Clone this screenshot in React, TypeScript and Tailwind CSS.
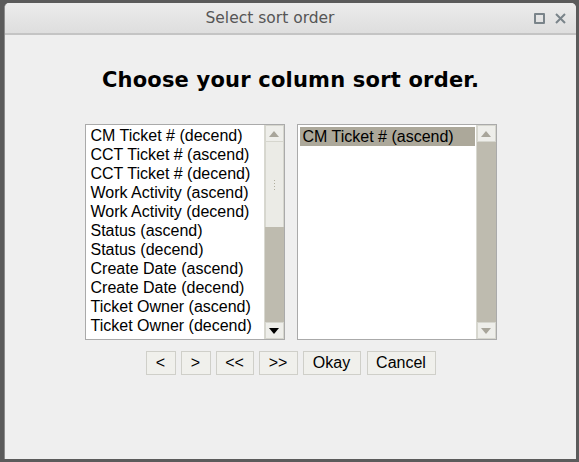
import React from "react";

const left = [
  "CM Ticket # (decend)",
  "CCT Ticket # (ascend)",
  "CCT Ticket # (decend)",
  "Work Activity (ascend)",
  "Work Activity (decend)",
  "Status (ascend)",
  "Status (decend)",
  "Create Date (ascend)",
  "Create Date (decend)",
  "Ticket Owner (ascend)",
  "Ticket Owner (decend)",
];

function Arrow({ up, dark }: { up: boolean; dark?: boolean }) {
  return (
    <svg width="10" height="6" viewBox="0 0 10 6">
      {up ? (
        <polygon points="5,0 10,6 0,6" fill={dark ? "#000" : "#a8a59a"} />
      ) : (
        <polygon points="0,0 10,0 5,6" fill={dark ? "#000" : "#a8a59a"} />
      )}
    </svg>
  );
}

function ScrollBar({ thumb }: { thumb: boolean }) {
  return (
    <div className="w-[20px] h-full flex flex-col bg-[#bebbaf] border-l border-[#d8d8d0]">
      <div className="h-[17px] bg-[#eeeeea] border border-[#d6d6ce] flex items-center justify-center">
        <Arrow up dark={false} />
      </div>
      {thumb ? (
        <>
          <div className="h-[85px] bg-[#ebebe6] border-x border-[#d6d6ce] flex items-center justify-center">
            <div className="flex flex-col gap-[2px]">
              <div className="w-[1px] h-[1px] bg-[#b0ae9e]" />
              <div className="w-[1px] h-[1px] bg-[#b0ae9e]" />
              <div className="w-[1px] h-[1px] bg-[#b0ae9e]" />
              <div className="w-[1px] h-[1px] bg-[#b0ae9e]" />
            </div>
          </div>
          <div className="flex-1" />
        </>
      ) : (
        <div className="flex-1" />
      )}
      <div className="h-[17px] bg-[#eeeeea] border border-[#d6d6ce] flex items-center justify-center">
        <Arrow up={false} dark={thumb} />
      </div>
    </div>
  );
}

function Btn({ children, w }: { children: React.ReactNode; w: string }) {
  return (
    <div
      className={`${w} h-[24px] flex items-center justify-center bg-[#f0f0ec] border border-[#cfcfc9] text-[16px] text-black`}
      style={{ fontFamily: '"Liberation Sans", Arial, sans-serif' }}
    >
      {children}
    </div>
  );
}

export default function App() {
  return (
    <div className="w-[579px] h-[462px] bg-[#5b5b5b] pt-[3px] pl-[4px] pr-[3px] pb-[3px]">
      <div className="w-full h-full rounded-t-[5px] bg-[#efefef] flex flex-col overflow-hidden border-l border-[#8c8c8c]">
        <div className="h-[32px] shrink-0 bg-gradient-to-b from-[#ececec] to-[#dedede] border-b-2 border-[#c4c4c4] relative flex items-center justify-center">
          <span
            className="text-[15.5px] text-[#565656] pr-[41px] pt-[1px]"
            style={{ fontFamily: '"DejaVu Sans", sans-serif' }}
          >
            Select sort order
          </span>
          <div className="absolute right-[10px] top-[10px] flex items-center gap-[10px]">
            <div className="w-[11px] h-[11px] border-2 border-[#7a848a] rounded-[1px]" />
            <svg width="11" height="11" viewBox="0 0 11 11">
              <path d="M1 1 L10 10 M10 1 L1 10" stroke="#7a848a" strokeWidth="2" />
            </svg>
          </div>
        </div>
        <div className="flex flex-col items-center pt-[35px]">
          <div
            className="text-[21px] font-bold text-black leading-none tracking-[0.2px]"
            style={{ fontFamily: '"DejaVu Sans", sans-serif' }}
          >
            Choose your column sort order.
          </div>
          <div
            className="flex gap-[12px] mt-[33px] mr-[0px]"
            style={{ fontFamily: '"Liberation Sans", Arial, sans-serif' }}
          >
            <div className="w-[200px] h-[216px] bg-white border border-[#aaaaaa] flex">
              <div className="flex-1 pt-[1px] pl-[5px] text-[16px] leading-[19px] text-black overflow-hidden">
                {left.map((t) => (
                  <div key={t} className="whitespace-nowrap">
                    {t}
                  </div>
                ))}
              </div>
              <ScrollBar thumb />
            </div>
            <div className="w-[200px] h-[216px] bg-white border border-[#aaaaaa] flex">
              <div className="flex-1 pt-[2px] pl-[2px] pr-[1px] text-[16px] leading-[19px] text-black">
                <div className="bg-[#aca89a] pl-[3px] whitespace-nowrap">CM Ticket # (ascend)</div>
              </div>
              <ScrollBar thumb={false} />
            </div>
          </div>
          <div className="flex mt-[11px] ml-[0px]">
            <Btn w="w-[30px]">&lt;</Btn>
            <div className="w-[5px]" />
            <Btn w="w-[30px]">&gt;</Btn>
            <div className="w-[5px]" />
            <Btn w="w-[38px]">&lt;&lt;</Btn>
            <div className="w-[5px]" />
            <Btn w="w-[39px]">&gt;&gt;</Btn>
            <div className="w-[5px]" />
            <Btn w="w-[58px]">Okay</Btn>
            <div className="w-[6px]" />
            <Btn w="w-[69px]">Cancel</Btn>
          </div>
        </div>
      </div>
    </div>
  );
}
